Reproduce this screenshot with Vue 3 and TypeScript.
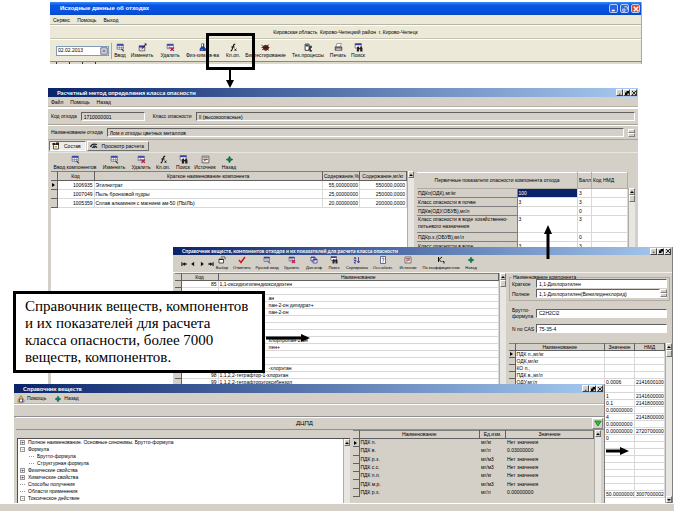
<script setup lang="ts">
interface Tool { icon: string; label: string }

const mainTools: Tool[] = [
  { icon: 'grid', label: 'Ввод' },
  { icon: 'edit', label: 'Изменить' },
  { icon: 'remove', label: 'Удалить' },
  { icon: 'flask', label: 'Физ-хим.св-ва' },
  { icon: 'fx', label: 'Кл.оп.' },
  { icon: 'bug', label: 'Биотестирование' },
  { icon: 'process', label: 'Тех.процессы' },
  { icon: 'print', label: 'Печать' },
  { icon: 'search', label: 'Поиск' },
]

const calcTools: Tool[] = [
  { icon: 'grid', label: 'Ввод компонентов' },
  { icon: 'grid', label: 'Изменить' },
  { icon: 'remove', label: 'Удалить' },
  { icon: 'fx', label: 'Кл.оп.' },
  { icon: 'search', label: 'Поиск' },
  { icon: 'source', label: 'Источник' },
  { icon: 'back', label: 'Назад' },
]

const refTools: Tool[] = [
  { icon: 'pick', label: 'Выбор' },
  { icon: 'check', label: 'Отметить' },
  { icon: 'grid', label: 'Ручной ввод' },
  { icon: 'remove', label: 'Удалить' },
  { icon: 'copy', label: 'Доп.инф' },
  { icon: 'search', label: 'Поиск' },
  { icon: 'sort', label: 'Сортировка' },
  { icon: 'help', label: 'Осн.обозн.' },
  { icon: 'source', label: 'Источник' },
  { icon: 'coef', label: 'По коэффициентам' },
  { icon: 'back', label: 'Назад' },
]

const navIcons = ['first', 'prev', 'next', 'last']

const components = [
  ['1006935', 'Этилнитрат', '55,00000000', '550000,0000'],
  ['1007049', 'Пыль бронзовой пудры', '25,00000000', '250000,0000'],
  ['1005359', 'Сплав алюминия с магнием ам-50 (ПЫЛЬ)', '20,00000000', '200000,0000'],
]

const indicators = [
  { name: 'ПДКп(ОДК),мг/кг', value: '100', score: '3' },
  { name: 'Класс опасности в почве', value: '3', score: '3' },
  { name: 'ПДКв(ОДУ,ОБУВ),мг/л', value: '', score: '0' },
  { name: 'Класс опасности в воде хозяйственно-питьевого назначения', value: '3', score: '3', tall: true },
  { name: 'ПДКр.х.(ОБУВ),мг/л', value: '', score: '0' },
  { name: 'Класс опасности в воде', value: '3', score: '3' },
]

// Rows that run beneath the callout carry only the end of their name.
const substances = [
  { code: '85', name: '1,1-оксидиэтилендиоксидиэтен', tail: false },
  { code: '', name: '', tail: false },
  { code: '', name: 'ан', tail: true },
  { code: '', name: 'пан-2-он дигидрат+', tail: true },
  { code: '', name: 'пан-2-он', tail: true },
  { code: '', name: '', tail: true },
  { code: '', name: '', tail: true },
  { code: '', name: '', tail: true },
  { code: '', name: 'хлорпропан-2-он', tail: true },
  { code: '', name: 'лен+', tail: true },
  { code: '', name: '', tail: true },
  { code: '', name: '', tail: true },
  { code: '', name: '-хлорэтан', tail: true },
  { code: '98', name: '1,1,2,2-тетрафтор-1-хлорэтан', tail: false },
  { code: '99', name: '1,1,2,2-тетрафторэтоксибензол', tail: false },
]

const norms = [
  ['ПДК п.,мг/кг', '', ''],
  ['ОДК,мг/кг', '', ''],
  ['КО п.,', '', ''],
  ['ПДК в.,мг/л', '', ''],
  ['ОДУ,мг/л', '0.0006', '2141600100'],
  ['', '', ''],
  ['', '1', '2141600000'],
  ['', '0.1', '2141800000'],
  ['', '0.00000000', ''],
  ['', '4', '2141800000'],
  ['', '0.00000000', ''],
  ['', '0.00000000', '2720700000'],
  ['', '0', ''],
  ['', '', ''],
  ['', '', ''],
  ['', '', ''],
  ['', '', ''],
  ['', '', ''],
  ['', '', ''],
  ['', '', ''],
  ['', '50.00000000', '3007000002'],
]

const tree = [
  { text: 'Полное наименование. Основные синонимы. Брутто-формула', mark: '+', level: 0 },
  { text: 'Формула', mark: '-', level: 0 },
  { text: 'Брутто-формула', mark: '', level: 1 },
  { text: 'Структурная формула', mark: '', level: 1 },
  { text: 'Физические свойства', mark: '+', level: 0 },
  { text: 'Химические свойства', mark: '+', level: 0 },
  { text: 'Способы получения', mark: '', level: 0 },
  { text: 'Области применения', mark: '', level: 0 },
  { text: 'Токсическое действие', mark: '-', level: 0 },
]

const limits = [
  ['ПДК п.', 'мг/кг', 'Нет значения'],
  ['ПДК в.', 'мг/л', '0.03000000'],
  ['ПДК р.з.', 'мг/м3', 'Нет значения'],
  ['ПДК с.с.', 'мг/м3', 'Нет значения'],
  ['ПДК п.п.', 'мг/кг', 'Нет значения'],
  ['ПДК м.р.', 'мг/м3', 'Нет значения'],
  ['ПДК р.х.', 'мг/л', '0.00000000'],
]
</script>

<template>
  <main class="canvas">
    <svg class="defs" width="0" height="0" aria-hidden="true">
      <symbol id="grid" viewBox="0 0 16 16"><path fill="#fff" stroke="#334" d="M2 2h11v9H2z" /><path fill="#3838b0" d="M2 2h11v3H2z" /><path stroke="#668" d="M2 8h11M6 5v6M10 5v6" /><path stroke="#333" stroke-width="2" d="M10 11l4 4" /></symbol>
      <symbol id="edit" viewBox="0 0 16 16"><path fill="#dde" stroke="#223" d="M2 5h10v9H2z" /><path fill="#3030a0" d="M2 5h10v3H2z" /><path stroke="#333" stroke-width="2" d="M7 10l7-8" /><path fill="#222" d="M11 1h4v4z" /></symbol>
      <symbol id="remove" viewBox="0 0 16 16"><path fill="#fff" stroke="#446" d="M2 2h11v8H2z" /><path fill="#3838b0" d="M2 2h11v3H2z" /><path stroke="#668" d="M2 8h11M6 5v5" /><path stroke="#b02050" stroke-width="2.5" d="M8 8l6 6M14 8l-6 6" /></symbol>
      <symbol id="flask" viewBox="0 0 16 16"><path fill="#223c9c" d="M6 1h5v5l3 4v4H3v-4l3-4z" /><path fill="#fff" d="M7 2h2v4H7z" /><path fill="#6c8cf0" d="M5 11h4v2H5z" /></symbol>
      <symbol id="fx" viewBox="0 0 16 16"><path fill="none" stroke="#111" stroke-width="2" d="M3 14c3 0 3-4 4-7s1-5 4-5M4 7h6" /><path stroke="#111" stroke-width="1.5" d="M10 10l3 4M13 10l-3 4" /></symbol>
      <symbol id="bug" viewBox="0 0 16 16"><path fill="#7a1c1c" d="M4 5l4-2 5 2 1 5-5 4-5-2z" /><path stroke="#222" stroke-width="1.5" d="M1 4l13 9M2 12L14 3M1 8h14" /></symbol>
      <symbol id="process" viewBox="0 0 16 16"><path fill="#fff" stroke="#222" stroke-width="1.5" d="M2 2h7v11H2z" /><path fill="#345" d="M3 3h5v3H3zM9 5h5v4H9z" /><path stroke="#222" stroke-width="2" d="M9 10l5 5M11 9v6" /></symbol>
      <symbol id="print" viewBox="0 0 16 16"><path fill="#fff" stroke="#555" d="M5 1h8l-2 6H3z" /><path fill="#777" stroke="#333" d="M2 7h12v6H2z" /><path fill="#ddd" d="M4 10h8v2H4z" /></symbol>
      <symbol id="search" viewBox="0 0 16 16"><path fill="#fff" stroke="#335" d="M2 1h11v8H2z" /><path fill="#3838a0" d="M2 1h11v3H2z" /><path fill="#222" d="M5 8l2-2h2v3h2V6h2l2 3v6h-4v-4H9v4H5z" /></symbol>
      <symbol id="source" viewBox="0 0 16 16"><path fill="#eee" stroke="#555" stroke-width="1.5" d="M2 2h12v12H2z" /><path stroke="#a34" stroke-width="1.5" d="M4 5h8M4 8h8M5 11l6-4" /></symbol>
      <symbol id="back" viewBox="0 0 16 16"><path fill="#0a7a5a" stroke="#064" d="M8 2l2 4 4 2-4 2-2 4-2-4-4-2 4-2z" /></symbol>
      <symbol id="pick" viewBox="0 0 16 16"><path fill="#fff" stroke="#222" stroke-width="1.5" d="M2 6h9v8H2zM6 2h8v5" /><path fill="#222" d="M2 6h9v2H2z" /></symbol>
      <symbol id="check" viewBox="0 0 16 16"><path fill="none" stroke="#d01818" stroke-width="3" d="M2 8l4 5 8-11" /></symbol>
      <symbol id="copy" viewBox="0 0 16 16"><path fill="#fff" stroke="#2a2a90" stroke-width="1.5" d="M2 2h8v8H2zM6 6h8v8H6z" /><path fill="#3838b0" d="M2 2h8v2H2zM6 6h8v2H6z" /></symbol>
      <symbol id="sort" viewBox="0 0 16 16"><path fill="none" stroke="#2a2a80" stroke-width="1.5" d="M2 7l2-5 2 5M2 9h4l-4 5h4M11 2v11M8 10l3 4 3-4" /></symbol>
      <symbol id="help" viewBox="0 0 16 16"><path fill="#fff" stroke="#446" stroke-width="1.5" d="M3 1h10v14H3z" /><path fill="none" stroke="#2a4ab0" stroke-width="1.5" d="M6 6c0-3 4-3 4 0 0 2-2 2-2 4M8 11v2" /></symbol>
      <symbol id="coef" viewBox="0 0 16 16"><path fill="none" stroke="#111" stroke-width="2" d="M3 2v10M10 2L4 7l5 5M11 11h3v4" /></symbol>
      <symbol id="first" viewBox="0 0 16 16"><path fill="#111" d="M1 3h3v10H1zM4 8l6-5v3h5v4h-5v3z" /></symbol>
      <symbol id="prev" viewBox="0 0 16 16"><path fill="#111" d="M3 8l8-6v12z" /></symbol>
      <symbol id="next" viewBox="0 0 16 16"><path fill="#111" d="M13 8L5 2v12z" /></symbol>
      <symbol id="last" viewBox="0 0 16 16"><path fill="#111" d="M15 3h-3v10h3zM12 8L6 3v3H1v4h5v3z" /></symbol>
      <symbol id="tab" viewBox="0 0 16 16"><path fill="#fff" stroke="#222" stroke-width="1.5" d="M3 5h10v9H3z" /><path fill="#222" d="M1 2h6v4H1zM8 1h6v5H8z" /><path fill="#caa020" d="M5 8h5v3H5z" /></symbol>
      <symbol id="view" viewBox="0 0 16 16"><path fill="none" stroke="#222" stroke-width="2.5" d="M1 10c2-6 6-7 13-5M5 12c1-4 6-5 9-1" /><path fill="#223a80" d="M6 7h5v5H6z" /></symbol>
      <symbol id="bell" viewBox="0 0 16 16"><path fill="#f2c23a" stroke="#7a3b10" d="M8 1l6 9v4H2v-4z" /><path fill="#fff" stroke="#2038a0" stroke-width="1.5" d="M5 8h6v6H5z" /></symbol>
      <symbol id="app" viewBox="0 0 16 16"><path fill="#fff" d="M1 1h14v14H1z" /><path fill="#78b8d8" d="M3 5h10v8H3z" /></symbol>
    </svg>

    <!-- Waste source data -->
    <section class="win source-win">
      <header class="title xp">
        <svg class="app"><use href="#app" /></svg>
        <h2>Исходные данные об отходах</h2>
        <button class="xp-btn" aria-label="Свернуть"><svg viewBox="0 0 8 8"><path d="M1 6h4" stroke="#fff" stroke-width="2" /></svg></button>
        <button class="xp-btn" aria-label="Восстановить"><svg viewBox="0 0 8 8"><path d="M1 4h3v3H1zM3 1h4v4" fill="none" stroke="#fff" /></svg></button>
        <button class="xp-btn close" aria-label="Закрыть"><svg viewBox="0 0 8 8"><path d="M1 1l6 6M7 1L1 7" stroke="#fff" stroke-width="2" /></svg></button>
      </header>
      <nav class="menu"><a href="#">Сервис</a><a href="#">Помощь</a><a href="#">Выход</a></nav>
      <p class="region">Кировская область&nbsp; Кирово-Чепецкий район&nbsp; г. Кирово-Чепецк</p>
      <div class="main-bar">
        <label class="date"><input type="text" value="02.02.2013" aria-label="Дата"><svg viewBox="0 0 10 10"><path fill="#e8e8f0" stroke="#446" d="M1 1h8v8H1z" /><path stroke="#446" d="M3 4h4M3 6h4" /></svg></label>
        <div class="tools main-tools">
          <button v-for="t in mainTools" :key="t.label" class="tool"><svg><use :href="'#' + t.icon" /></svg><span>{{ t.label }}</span></button>
        </div>
      </div>
      <div class="cut"><i></i><i></i><i></i><i></i></div>
    </section>

    <!-- Hazard class calculation -->
    <section class="win calc-win">
      <header class="title">
        <svg class="app"><use href="#app" /></svg>
        <h2>Расчетный метод определения класса опасности</h2>
        <button class="cap" aria-label="Свернуть"><svg viewBox="0 0 5 5"><path d="M1 4h2" stroke="#000" /></svg></button><button class="cap" aria-label="Восстановить"><svg viewBox="0 0 5 5"><path d="M0 2h3v3H0zM2 0h3v3H2z" /></svg></button><button class="cap" aria-label="Закрыть"><svg viewBox="0 0 5 5"><path d="M0 0l5 5M5 0L0 5" stroke="#000" /></svg></button>
      </header>
      <nav class="menu"><a href="#">Файл</a><a href="#">Помощь</a><a href="#">Назад</a></nav>
      <div class="fields first">
        <label for="code">Код отхода</label><input id="code" class="sunk code" readonly value="1710000001">
        <label for="cls" class="gap-left">Класс опасности</label><input id="cls" class="sunk grow" readonly value="II (высокоопасные)">
      </div>
      <div class="fields">
        <label for="waste">Наименование отхода</label><input id="waste" class="sunk grow" readonly value="Лом и отходы цветных металлов">
        <span class="spin"><i></i><i></i></span>
      </div>
      <div class="tabs">
        <button class="tab on"><svg><use href="#tab" /></svg>Состав</button>
        <button class="tab"><svg><use href="#view" /></svg>Просмотр расчета</button>
      </div>
      <div class="tools calc-tools">
        <button v-for="t in calcTools" :key="t.label" class="tool"><svg><use :href="'#' + t.icon" /></svg><span>{{ t.label }}</span></button>
      </div>
      <div class="split">
        <div class="pane white">
          <table class="comp">
            <colgroup><col class="w6"><col class="w37"><col><col class="w37"><col class="w47"></colgroup>
            <thead><tr><th></th><th>Код</th><th>Краткое наименование компонента</th><th>Содержание,%</th><th>Содержание,мг/кг</th></tr></thead>
            <tbody>
              <tr v-for="(r, i) in components" :key="r[0]">
                <td class="gut"><b v-if="i === 0"></b></td><td class="num">{{ r[0] }}</td><td>{{ r[1] }}</td><td class="num">{{ r[2] }}</td><td class="num">{{ r[3] }}</td>
              </tr>
            </tbody>
          </table>
          <div class="scroll"><i class="up"></i></div>
        </div>
        <div class="pane ind-pane">
          <table class="ind">
            <colgroup><col class="w100"><col><col class="w14"><col class="w36"></colgroup>
            <thead><tr><th colspan="2">Первичные показатели опасности компонента отхода</th><th>Балл</th><th class="left">Код НМД</th></tr></thead>
            <tbody>
              <tr v-for="(r, i) in indicators" :key="r.name" :class="{ tall: r.tall }">
                <td class="name">{{ r.name }}</td><td :class="{ sel: i === 0 }">{{ r.value }}</td><td>{{ r.score }}</td><td></td>
              </tr>
            </tbody>
          </table>
          <div class="scroll low"><i class="up"></i><i class="thumb"></i></div>
        </div>
      </div>
    </section>

    <!-- Reference of substances and components -->
    <section class="win ref-win">
      <header class="title small">
        <svg class="app"><use href="#app" /></svg>
        <h2>Справочник веществ, компонентов отходов и их показателей для расчета класса опасности</h2>
        <button class="cap" aria-label="Свернуть"><svg viewBox="0 0 5 5"><path d="M1 4h2" stroke="#000" /></svg></button><button class="cap" aria-label="Восстановить"><svg viewBox="0 0 5 5"><path d="M0 2h3v3H0zM2 0h3v3H2z" /></svg></button><button class="cap" aria-label="Закрыть"><svg viewBox="0 0 5 5"><path d="M0 0l5 5M5 0L0 5" stroke="#000" /></svg></button>
      </header>
      <div class="tools ref-tools">
        <button v-for="n in navIcons" :key="n" class="tool nav" :aria-label="n"><svg><use :href="'#' + n" /></svg></button>
        <button v-for="t in refTools" :key="t.label" class="tool"><svg><use :href="'#' + t.icon" /></svg><span>{{ t.label }}</span></button>
      </div>
      <div class="ref-body">
        <div class="pane white">
          <table class="dense">
            <colgroup><col class="w6"><col class="w37"><col></colgroup>
            <thead><tr><th></th><th>Код</th><th>Наименование</th></tr></thead>
            <tbody><tr v-for="(r, i) in substances" :key="i"><td class="gut"></td><td class="num">{{ r.code }}</td><td :class="{ tail: r.tail }">{{ r.name }}</td></tr></tbody>
          </table>
          <div class="scroll"><i class="up"></i><i class="thumb"></i></div>
        </div>
        <div class="details">
          <fieldset>
            <legend>Наименование компонента</legend>
            <label for="short">Краткое</label><input id="short" class="sunk" value="1,1-Дихлорэтилен">
            <label for="full">Полное</label><span class="with-spin"><input id="full" class="sunk grow" value="1,1-Дихлорэтилен(Винилиденхлорид)"><span class="spin"><i></i><i></i></span></span>
          </fieldset>
          <div class="chem">
            <label for="brutto">Брутто-<br>формула</label><input id="brutto" class="sunk" value="C2H2Cl2">
            <label for="cas">N по CAS</label><input id="cas" class="sunk" value="75-35-4">
          </div>
          <div class="pane white norm-pane">
            <table class="dense">
              <colgroup><col class="w6"><col><col class="w30"><col class="w30"></colgroup>
              <thead><tr><th></th><th>Наименование</th><th>Значение</th><th>НМД</th></tr></thead>
              <tbody>
                <tr v-for="(r, i) in norms" :key="i"><td class="gut"><b v-if="i === 0"></b></td><td>{{ r[0] }}</td><td>{{ r[1] }}</td><td class="num">{{ r[2] }}</td></tr>
              </tbody>
            </table>
            <div class="scroll"><i class="up"></i><i class="thumb"></i><i class="down"></i></div>
          </div>
        </div>
      </div>
    </section>

    <!-- Substance card -->
    <section class="win card-win">
      <header class="title">
        <svg class="app"><use href="#app" /></svg>
        <h2>Справочник веществ</h2>
        <button class="cap" aria-label="Свернуть"><svg viewBox="0 0 5 5"><path d="M1 4h2" stroke="#000" /></svg></button><button class="cap" aria-label="Восстановить"><svg viewBox="0 0 5 5"><path d="M0 2h3v3H0zM2 0h3v3H2z" /></svg></button><button class="cap" aria-label="Закрыть"><svg viewBox="0 0 5 5"><path d="M0 0l5 5M5 0L0 5" stroke="#000" /></svg></button>
      </header>
      <nav class="menu card-menu"><a href="#"><svg><use href="#bell" /></svg>Помощь</a><a href="#"><svg><use href="#back" /></svg>Назад</a></nav>
      <div class="blank"></div>
      <div class="subject"><span>ДЦПД</span><button aria-label="Открыть"><svg viewBox="0 0 10 8"><path fill="#28c828" stroke="#0a7a0a" d="M1 1h8L5 7z" /></svg></button></div>
      <div class="card-body">
        <div class="tree-side">
          <div class="pane white tree-pane">
            <ul class="tree">
              <li v-for="n in tree" :key="n.text" :class="{ sub: n.level }"><i :class="{ box: n.mark }">{{ n.mark }}</i>{{ n.text }}</li>
            </ul>
            <div class="scroll"><i class="up"></i></div>
          </div>
        </div>
        <div class="pane limit-pane">
          <table class="limits">
            <colgroup><col class="w6"><col><col class="w26"><col class="w88"></colgroup>
            <thead><tr><th></th><th>Наименование</th><th>Ед.изм.</th><th>Значение</th></tr></thead>
            <tbody><tr v-for="(r, i) in limits" :key="r[0]"><td class="gut"><b v-if="i === 0"></b></td><td>{{ r[0] }}</td><td>{{ r[1] }}</td><td>{{ r[2] }}</td></tr></tbody>
          </table>
          <div class="scroll"><i class="up"></i></div>
        </div>
      </div>
    </section>

    <!-- Annotations -->
    <div class="marker"></div>
    <svg class="arrow a1" viewBox="0 0 10 20"><path d="M5 0v14" stroke="#000" stroke-width="2" /><path d="M1 12h8L5 20z" /></svg>
    <p class="callout">Справочник веществ, компонентов<br>и их показателей для расчета<br>класса опасности, более 7000<br>веществ, компонентов.</p>
    <svg class="arrow a2" viewBox="0 0 44 10"><path d="M0 5h37" stroke="#000" stroke-width="3" /><path d="M35 1v8l9-4z" /></svg>
    <svg class="arrow a3" viewBox="0 0 10 34"><path d="M5 34V7" stroke="#000" stroke-width="3" /><path d="M1 9h8L5 0z" /></svg>
    <svg class="arrow a4" viewBox="0 0 23 10"><path d="M0 5h16" stroke="#000" stroke-width="3" /><path d="M14 1v8l9-4z" /></svg>

    <footer class="status"></footer>
  </main>
</template>

<style>
body { margin: 0; background: #fff; }
</style>

<style scoped>
.canvas { position: relative; display: flex; flex-direction: column; justify-content: flex-end; min-height: 100vh; overflow: hidden; background: #fff; color: #000; font: 5px/7px "Liberation Sans", sans-serif; }
.canvas * { box-sizing: border-box; }
.defs { position: absolute; }
button, input { font: inherit; color: inherit; margin: 0; padding: 0; border: 0; background: none; border-radius: 0; min-width: 0; }
h2, p, ul { margin: 0; padding: 0; }
a { color: inherit; text-decoration: none; }
.grow { flex: 1; }

.win { position: absolute; display: flex; flex-direction: column; overflow: hidden; background: #d4d0c8; }
.source-win { left: 50px; right: 32px; top: 2px; background: #ece9d8; border-right: 1px solid #aca899; }
.calc-win { left: 48px; right: 36px; top: 88px; bottom: 127px; }
.ref-win { left: 173px; right: 1px; top: 247px; bottom: 8px; border-right: 1px solid #808080; }
.card-win { left: 14px; right: 69px; top: 384px; bottom: 8px; border-right: 1px solid #808080; }

.title { display: flex; align-items: center; flex: none; height: 9px; padding: 0 1px; background: linear-gradient(90deg, #0a246a, #a6caf0); color: #fff; }
.title h2 { flex: 1; font: bold 6px/7px Lato, "Liberation Sans", sans-serif; white-space: nowrap; }
.title.small { height: 8px; }
.title.small h2 { font-size: 5px; }
.title.xp { height: 13px; background: linear-gradient(#3a8cf8, #0a55e4 25%, #0650dc 80%, #0a48c0); }
.title.xp h2 { font-family: "Liberation Sans", sans-serif; }
.app { width: 6px; height: 6px; margin-right: 2px; flex: none; }
.xp .app { width: 8px; margin-right: 1px; }
.cap { display: grid; place-items: center; width: 7px; height: 7px; background: #d4d0c8; border: 1px solid; border-color: #fff #404040 #404040 #fff; }
.cap svg { width: 4px; height: 4px; }
.xp-btn { width: 9px; height: 9px; margin-left: 2px; border: 1px solid #b8cdf8; background: #2c62e0; border-radius: 2px; display: grid; place-items: center; }
.xp-btn.close { background: #dc4a28; }
.xp-btn svg { width: 6px; height: 6px; }

.menu { display: flex; align-items: center; flex: none; gap: 7px; height: 11px; padding: 0 3px; border-bottom: 1px solid #fff; box-shadow: 0 -1px #b8b4a8 inset; }
.region { padding: 3px 0; text-align: center; border-bottom: 1px solid #fff; box-shadow: 0 -1px #c8c4b4 inset; }
.main-bar { display: flex; align-items: center; height: 21px; }
.date { display: flex; align-items: center; width: 53px; height: 10px; margin-left: 6px; background: #fff; border: 1px solid #7f9db9; flex: none; }
.date input { flex: 1; padding-left: 1px; }
.date svg { width: 8px; height: 8px; }
.main-tools { margin-left: 2px; border-left: 1px solid #aca899; grid-template-columns: 16px 28px 28px 37px 24px 41px 44px 16px 24px; }
.cut { display: flex; gap: 12px; height: 3px; padding-left: 6px; border-top: 1px solid #888; background: #dcd9cc; }
.cut i { width: 1px; height: 2px; background: #333; }

.tools { display: grid; flex: none; }
.tool { display: flex; flex-direction: column; align-items: center; white-space: nowrap; }
.tool svg { width: 9px; height: 9px; flex: none; }
.calc-tools { height: 19px; padding: 2px 0 0 3px; grid-template-columns: 48px 30px 24px 20px 20px 24px 24px; border-top: 1px solid #e8e6e0; }
.ref-tools { height: 18px; padding: 1px 0 0 6px; grid-template-columns: repeat(4, 9px) 14px 26px 24px 25px 20px 20px 26px 26px 24px 42px 18px; font-size: 4px; border-bottom: 1px solid #f4f2ee; }
.ref-tools .tool svg { width: 8px; height: 8px; }
.ref-tools .nav { justify-content: center; }
.ref-tools .nav svg { width: 6px; height: 6px; }

.sunk { height: 9px; padding: 0 2px; border: 1px solid; border-color: #606060 #fff #fff #606060; }
.fields { display: flex; align-items: center; flex: none; gap: 4px; height: 15px; padding: 0 3px; border-top: 1px solid #fff; border-bottom: 1px solid #a8a49c; white-space: nowrap; }
.fields.first { height: 17px; }
.gap-left { padding-left: 4px; }
.code { width: 64px; }
.spin { display: flex; flex-direction: column; width: 7px; height: 8px; flex: none; }
.spin i { flex: 1; border: 1px solid; border-color: #fff #808080 #808080 #fff; background: #d4d0c8; }

.tabs { display: flex; gap: 1px; height: 12px; padding: 1px; flex: none; }
.tab { display: flex; align-items: center; gap: 4px; padding: 0 4px 0 2px; border: 1px solid; border-color: #fff #707070 #707070 #fff; }
.tab.on { background: #eeece8; border-color: #707070 #fff #fff #707070; }
.tab svg { width: 8px; height: 8px; }

.split { display: flex; flex: 1; gap: 3px; padding: 0 3px; min-height: 0; }
.split > .pane:first-child { flex: 1; }
.ind-pane { width: 218px; padding-top: 1px; }
.pane { display: flex; align-items: flex-start; min-width: 0; min-height: 0; overflow: hidden; }
.white { background: #fff; }

table { flex: 1; width: 100%; min-width: 0; table-layout: fixed; border-collapse: collapse; }
th, td { padding: 0 1px; font-weight: normal; text-align: left; white-space: nowrap; overflow: hidden; border-right: 1px solid #d8d8d8; border-bottom: 1px solid #d8d8d8; }
th { text-align: center; background: #d4d0c8; border-color: #606060; border-top: 1px solid #808080; }
tr { height: 9px; }
.num { text-align: right; }
.gut { padding: 0; background: #d4d0c8; border-color: #606060; }
.gut b { display: block; width: 0; height: 0; margin-left: 1px; border: solid transparent; border-width: 2px 0 2px 3px; border-left-color: #000; }
.w6 { width: 6px; } .w14 { width: 14px; } .w26 { width: 26px; } .w30 { width: 30px; }
.w36 { width: 36px; } .w37 { width: 37px; } .w47 { width: 47px; } .w88 { width: 88px; } .w100 { width: 100px; }

.scroll { display: flex; flex-direction: column; align-self: stretch; width: 7px; flex: none; background: #e8e6e2; border-left: 1px solid #b0aca4; }
.scroll i { height: 7px; background: #d4d0c8; border: 1px solid; border-color: #fff #707070 #707070 #fff; display: grid; place-items: center; flex: none; }
.scroll .up::after, .scroll .down::after { content: ""; border: solid transparent; border-width: 0 2px 2px; border-bottom-color: #000; }
.scroll .down { margin-top: auto; }
.scroll .down::after { border-width: 2px 2px 0; border-top-color: #000; }
.scroll.low { margin-top: 16px; }

.ind { background: #fff; }
.ind thead tr { height: 16px; }
.ind th { border-color: #b0aca4; border-top-color: #fff; }
.ind th.left { text-align: left; }
.ind .name { background: #d4d0c8; border-color: #808080; white-space: normal; }
.ind .tall { height: 17px; vertical-align: top; }
.ind .sel { background: #0a246a; color: #fff; }

.dense { line-height: 6px; }
.dense tr { height: 7px; }
.dense .tail { padding-left: 50px; }
.ref-body { display: flex; flex: 1; min-height: 0; padding-left: 2px; }
.ref-body > .pane { flex: 1; }
.details { display: flex; flex-direction: column; width: 166px; padding: 2px 0 0 3px; line-height: 6px; }
.details .sunk { background: #fff; width: 100%; }
fieldset { display: grid; grid-template-columns: 24px 1fr; row-gap: 1px; align-items: center; margin: 0 2px 0 0; padding: 0 2px 2px; border: 1px solid #b0aca4; min-width: 0; }
legend { padding: 0 1px; line-height: 4px; }
.with-spin { display: flex; background: #fff; }
.chem { display: grid; grid-template-columns: 24px 1fr; row-gap: 5px; align-items: center; padding: 6px 5px 10px 3px; }
.norm-pane { flex: 1; }

.card-menu { height: 12px; gap: 8px; }
.card-menu a { display: flex; align-items: center; gap: 2px; }
.card-menu svg { width: 8px; height: 8px; }
.blank { height: 12px; flex: none; border-bottom: 1px solid #909090; }
.subject { display: flex; align-items: center; flex: none; height: 13px; padding: 0 1px; margin-left: 2px; border-top: 1px solid #fff; border-bottom: 1px solid #909090; }
.subject span { flex: 1; text-align: center; font-size: 6px; }
.subject button { width: 11px; height: 11px; border: 1px solid; border-color: #fff #808080 #808080 #fff; display: grid; place-items: center; }
.subject svg { width: 8px; height: 7px; }
.card-body { display: flex; flex: 1; gap: 3px; padding: 0 3px; min-height: 0; }
.tree-side { display: flex; flex: 1; padding-top: 8px; min-width: 0; }
.tree-pane { flex: 1; border-top: 1px solid #505050; border-left: 1px solid #505050; }
.tree { display: grid; flex: 1; grid-template-rows: repeat(9, 7px); height: 63px; list-style: none; padding-left: 2px; }
.tree li { display: flex; align-items: center; gap: 3px; white-space: nowrap; }
.tree li.sub { padding-left: 9px; }
.tree i { width: 5px; border-top: 1px dotted #999; font-style: normal; }
.tree i.box { height: 5px; border: 1px solid #999; line-height: 3px; text-align: center; }
.limit-pane { width: 248px; }
.limits { height: 67px; }
.limits td { border-color: #d4d0c8; }
.limits .gut { border-color: #606060; }
.limits tr { height: 8px; }

.marker { position: absolute; left: 206px; top: 33px; width: 49px; height: 37px; border: 3px solid #000; }
.arrow { position: absolute; }
.a1 { left: 225px; top: 68px; width: 10px; height: 20px; }
.a2 { left: 266px; top: 333px; width: 44px; height: 10px; }
.a3 { left: 543px; top: 225px; width: 10px; height: 34px; }
.a4 { left: 606px; top: 446px; width: 23px; height: 10px; }
.callout { position: absolute; left: 13px; top: 291px; padding: 4px 14px 4px 9px; border: 3px solid #000; background: #fff; color: #000; font: 15px/17px "Liberation Serif", serif; white-space: nowrap; }
.status { position: relative; height: 8px; background: #d4d0c8; border-top: 1px solid #fff; }
</style>
